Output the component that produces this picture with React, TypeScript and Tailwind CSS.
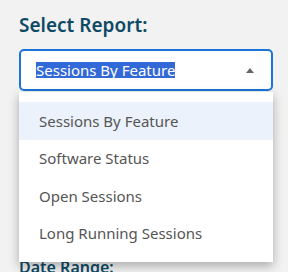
const options = ["Sessions By Feature", "Software Status", "Open Sessions", "Long Running Sessions"];

export default function App() {
  return (
    <div className="min-h-screen bg-[#f2f2f2] px-[19px] pt-[12px] font-['Noto_Sans',sans-serif]">
      <h2 className="text-[19px] font-semibold leading-[27px] text-[#0e4a66]">Select Report:</h2>

      <div className="relative mt-[10px] w-[254px]">
        <div className="flex h-[42px] items-center justify-between rounded-[5px] border-2 border-[#1b74d8] bg-white pl-[15px] pr-[17px]">
          <span className="bg-[#3369d6] text-[15px] leading-[16px] text-white">Sessions By Feature</span>
          <span className="h-0 w-0 border-x-[4px] border-b-[5px] border-x-transparent border-b-[#666]" />
        </div>

        <ul className="absolute left-0 top-[43px] z-10 w-full bg-white py-[10px] shadow-[0_4px_10px_rgba(0,0,0,0.3)]">
          {options.map((o, i) => (
            <li
              key={o}
              className={`flex h-[37.5px] items-center pl-[20px] text-[15px] text-[#555] ${i === 0 ? "bg-[#ebf2fb]" : ""}`}
            >
              {o}
            </li>
          ))}
        </ul>
      </div>

      <div className="mt-[166px] text-[16px] font-semibold leading-[20px] text-[#0e4a66]">Date Range:</div>
    </div>
  );
}
